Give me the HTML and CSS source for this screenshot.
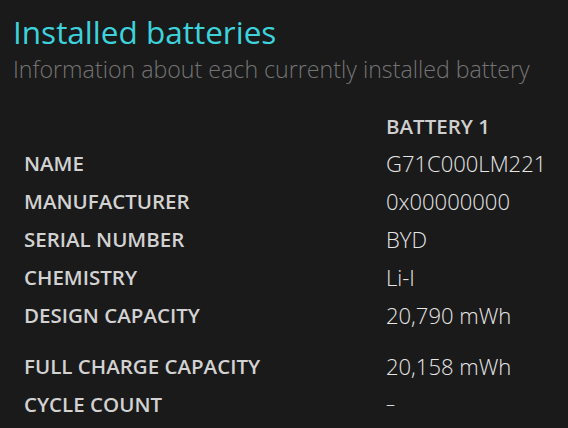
FILE: index.html
```html
<!DOCTYPE html>
<html>
<head>
<meta charset="utf-8">
<link rel="stylesheet" href="styles.css">
</head>
<body>
<div class="page">
  <h1 class="title">Installed batteries</h1>
  <p class="subtitle">Information about each currently installed battery</p>
  <div class="table">
    <div class="row head"><span class="label"></span><span class="col-head">BATTERY 1</span></div>
    <div class="row"><span class="label">NAME</span><span class="value">G71C000LM221</span></div>
    <div class="row"><span class="label">MANUFACTURER</span><span class="value">0x00000000</span></div>
    <div class="row"><span class="label">SERIAL NUMBER</span><span class="value">BYD</span></div>
    <div class="row"><span class="label">CHEMISTRY</span><span class="value">Li-I</span></div>
    <div class="row"><span class="label">DESIGN CAPACITY</span><span class="value">20,790 mWh</span></div>
    <div class="row spaced"><span class="label">FULL CHARGE CAPACITY</span><span class="value">20,158 mWh</span></div>
    <div class="row"><span class="label">CYCLE COUNT</span><span class="value dash">–</span></div>
  </div>
</div>
</body>
</html>
```
FILE: styles.css
```css
html, body {
  margin: 0;
  padding: 0;
  background: #1a1a1a;
}
.page {
  font-family: "Open Sans", "Noto Sans", sans-serif;
  padding: 12px 0 0 13px;
  height: 428px;
  box-sizing: border-box;
  overflow: hidden;
}
.title {
  margin: 0;
  font-size: 31.5px;
  font-weight: 400;
  line-height: 40px;
  color: #3dd2dc;
}
.subtitle {
  margin: 3px 0 0 0;
  font-size: 23.2px;
  font-weight: 300;
  line-height: 28px;
  color: #747474;
  white-space: nowrap;
}
.table {
  margin-top: 24px;
  padding-left: 11px;
}
.row {
  display: grid;
  grid-template-columns: 362px 1fr;
  height: 38px;
  align-items: center;
  white-space: nowrap;
}
.row.head {
  height: 37px;
}
.row.spaced {
  margin-top: 13px;
}
.label {
  font-size: 20.5px;
  font-weight: 600;
  color: #d2d2d2;
}
.col-head {
  font-size: 20.5px;
  font-weight: 600;
  color: #cfcfcf;
}
.value {
  font-size: 22px;
  font-weight: 300;
  color: #e6e6e6;
}
.value.dash {
  font-size: 18px;
}
```
